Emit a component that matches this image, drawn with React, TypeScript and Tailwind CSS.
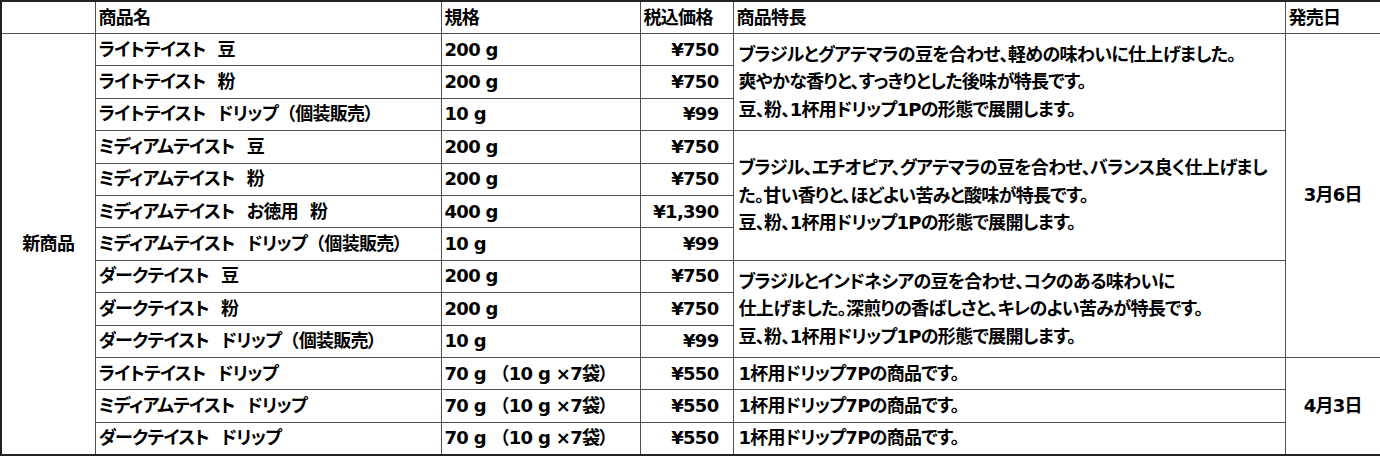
import React from 'react'

type Row = {
  name: string
  spec: string
  price: string
}

const rows: Row[] = [
  { name: 'ライトテイスト　豆', spec: '200 g', price: '¥750' },
  { name: 'ライトテイスト　粉', spec: '200 g', price: '¥750' },
  { name: 'ライトテイスト　ドリップ（個装販売）', spec: '10 g', price: '¥99' },
  { name: 'ミディアムテイスト　豆', spec: '200 g', price: '¥750' },
  { name: 'ミディアムテイスト　粉', spec: '200 g', price: '¥750' },
  { name: 'ミディアムテイスト　お徳用　粉', spec: '400 g', price: '¥1,390' },
  { name: 'ミディアムテイスト　ドリップ（個装販売）', spec: '10 g', price: '¥99' },
  { name: 'ダークテイスト　豆', spec: '200 g', price: '¥750' },
  { name: 'ダークテイスト　粉', spec: '200 g', price: '¥750' },
  { name: 'ダークテイスト　ドリップ（個装販売）', spec: '10 g', price: '¥99' },
  { name: 'ライトテイスト　ドリップ', spec: '70 g （10 g ×7袋）', price: '¥550' },
  { name: 'ミディアムテイスト　ドリップ', spec: '70 g （10 g ×7袋）', price: '¥550' },
  { name: 'ダークテイスト　ドリップ', spec: '70 g （10 g ×7袋）', price: '¥550' },
]

// merged feature cells: start row index -> [rowSpan, lines]
const features: Record<number, [number, string[]]> = {
  0: [3, [
    'ブラジルとグアテマラの豆を合わせ、軽めの味わいに仕上げました。',
    '爽やかな香りと、すっきりとした後味が特長です。',
    '豆、粉、1杯用ドリップ1Pの形態で展開します。',
  ]],
  3: [4, [
    'ブラジル、エチオピア、グアテマラの豆を合わせ、バランス良く仕上げまし',
    'た。甘い香りと、ほどよい苦みと酸味が特長です。',
    '豆、粉、1杯用ドリップ1Pの形態で展開します。',
  ]],
  7: [3, [
    'ブラジルとインドネシアの豆を合わせ、コクのある味わいに',
    '仕上げました。深煎りの香ばしさと、キレのよい苦みが特長です。',
    '豆、粉、1杯用ドリップ1Pの形態で展開します。',
  ]],
  10: [1, ['1杯用ドリップ7Pの商品です。']],
  11: [1, ['1杯用ドリップ7Pの商品です。']],
  12: [1, ['1杯用ドリップ7Pの商品です。']],
}

// keep the opening bracket full width, tighten the ideographic space
function Txt({ s }: { s: string }) {
  const parts = s.split(/(（|　)/)
  return (
    <>
      {parts.map((p, i) => {
        if (p === '（') return <span key={i} className="[font-feature-settings:normal]">（</span>
        if (p === '　') return <span key={i} className="tracking-[-6px]">　</span>
        return <React.Fragment key={i}>{p}</React.Fragment>
      })}
    </>
  )
}

const cell = 'border border-[#505050] p-0 align-middle whitespace-nowrap'

export default function App() {
  return (
    <div className="bg-white w-[1380px] h-[456px] overflow-hidden">
      <table
        className="w-[1380px] table-fixed border-collapse border-2 border-[#222] text-black font-bold text-[18px] leading-none tracking-[-0.7px] [font-feature-settings:'palt'] font-['DejaVu_Sans','Noto_Sans_CJK_JP',sans-serif]"
      >
        <colgroup>
          <col className="w-[94px]" />
          <col className="w-[346px]" />
          <col className="w-[199px]" />
          <col className="w-[93px]" />
          <col className="w-[552px]" />
          <col className="w-[96px]" />
        </colgroup>
        <thead>
          <tr className="h-[32.5px]">
            <th className={cell}></th>
            <th className={`${cell} text-left pl-[3px]`}>商品名</th>
            <th className={`${cell} text-left pl-[3px]`}>規格</th>
            <th className={`${cell} text-left pl-[3px]`}>税込価格</th>
            <th className={`${cell} text-left pl-[3px]`}>商品特長</th>
            <th className={`${cell} text-left pl-[3px]`}>発売日</th>
          </tr>
        </thead>
        <tbody>
          {rows.map((r, i) => (
            <tr key={i} className="h-[32.4px]">
              {i === 0 && (
                <td rowSpan={13} className={`${cell} text-center`}>新商品</td>
              )}
              <td className={`${cell} pl-[3px]`}><Txt s={r.name} /></td>
              <td className={`${cell} pl-[3px]`}><Txt s={r.spec} /></td>
              <td className={`${cell} text-right pr-[14px]`}>{r.price}</td>
              {features[i] && (
                <td rowSpan={features[i][0]} className={`${cell} pl-[5px] leading-[27.5px]`}>
                  {features[i][1].map((l) => (
                    <div key={l}>{l}</div>
                  ))}
                </td>
              )}
              {i === 0 && (
                <td rowSpan={10} className={`${cell} text-center`}>3月6日</td>
              )}
              {i === 10 && (
                <td rowSpan={3} className={`${cell} text-center`}>4月3日</td>
              )}
            </tr>
          ))}
        </tbody>
      </table>
    </div>
  )
}
